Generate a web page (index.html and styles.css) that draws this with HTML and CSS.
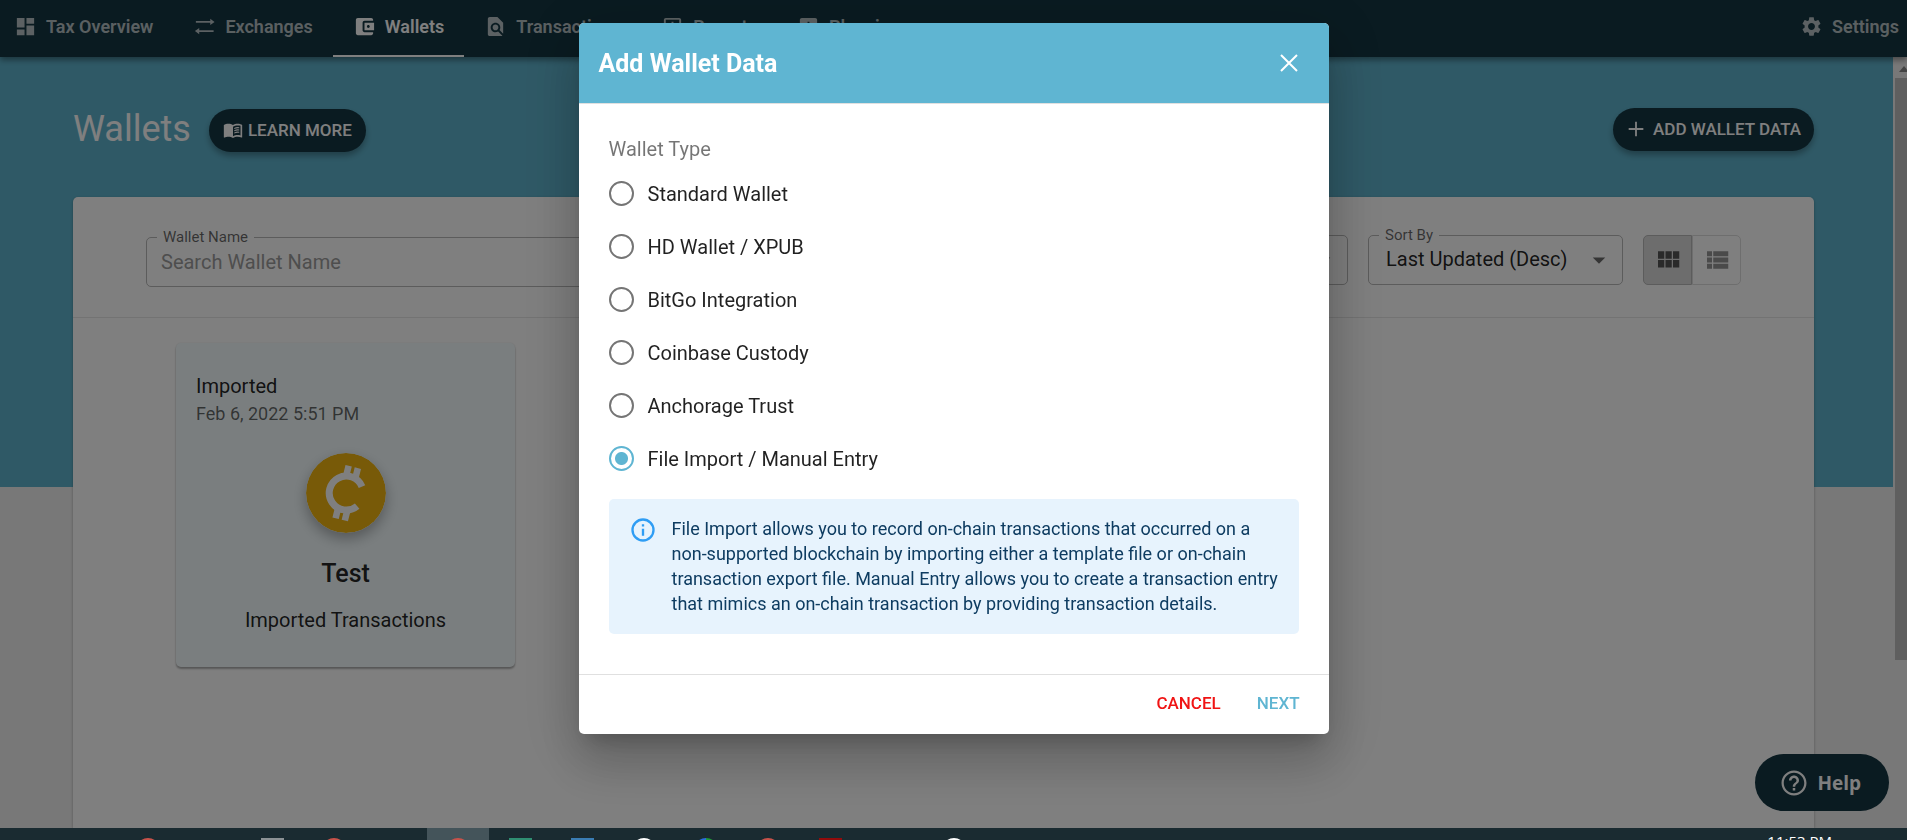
FILE: index.html
```
<!DOCTYPE html>
<html lang="en">
<head>
  <meta charset="UTF-8">
  <meta name="viewport" content="width=device-width, initial-scale=1.0">
  <title>Wallets</title>
  <link rel="stylesheet" href="styles.css">
</head>
<body>

  <div class="app">
    <nav class="navbar">
      <a href="#" class="tab">
        <svg class="icon" viewBox="0 0 24 24"><path d="M3 13h8V3H3v10zm0 8h8v-6H3v6zm10 0h8V11h-8v10zm0-18v6h8V3h-8z"/></svg>
        Tax Overview
      </a>
      <a href="#" class="tab">
        <svg class="icon" viewBox="0 0 24 24"><path d="M3 6.200h15V4l4.500 3.200-4.500 3.200V8.200H3zM21.500 17.800h-15V20L2 16.800l4.500-3.200v2.200h15z"/></svg>
        Exchanges
      </a>
      <a href="#" class="tab active">
        <svg class="icon" viewBox="0 0 24 24"><path d="M21 18v1c0 1.100-.9 2-2 2H5c-1.110 0-2-.9-2-2V5c0-1.100.89-2 2-2h14c1.100 0 2 .9 2 2v1h-9c-1.110 0-2 .9-2 2v8c0 1.100.89 2 2 2h9zm-9-2h10V8H12v8zm4-2.500c-.83 0-1.500-.67-1.500-1.500s.67-1.500 1.500-1.500 1.500.67 1.500 1.500-.67 1.500-1.500 1.500z"/></svg>
        Wallets
      </a>
      <a href="#" class="tab">
        <svg class="icon" viewBox="0 0 24 24"><path d="M20 19.590V8l-6-6H6c-1.100 0-1.990.9-1.990 2L4 20c0 1.100.89 2 1.990 2H18c.45 0 .85-.15 1.190-.4l-4.430-4.430c-.8.52-1.740.83-2.760.83-2.760 0-5-2.240-5-5s2.240-5 5-5 5 2.240 5 5c0 1.020-.31 1.960-.83 2.750L20 19.590zM9 13c0 1.660 1.340 3 3 3s3-1.340 3-3-1.340-3-3-3-3 1.340-3 3z"/></svg>
        Transactions
      </a>
      <a href="#" class="tab">
        <svg class="icon" viewBox="0 0 24 24"><path d="M19 3H5c-1.100 0-2 .9-2 2v14c0 1.100.9 2 2 2h14c1.100 0 2-.9 2-2V5c0-1.100-.9-2-2-2zm0 16H5V5h14v14zM7 10h2v7H7zm4-3h2v10h-2zm4 6h2v4h-2z"/></svg>
        Reports
      </a>
      <a href="#" class="tab">
        <svg class="icon" viewBox="0 0 24 24"><path d="M19 3H5c-1.100 0-2 .9-2 2v14c0 1.100.9 2 2 2h14c1.100 0 2-.9 2-2V5c0-1.100-.9-2-2-2zM9 17H7v-7h2v7zm4 0h-2V7h2v10zm4 0h-2v-4h2v4z"/></svg>
        Planning
      </a>
      <a href="#" class="tab settings">
        <svg class="icon" viewBox="0 0 24 24"><path d="M19.140 12.940c.04-.3.06-.61.06-.94 0-.32-.02-.64-.07-.94l2.030-1.580c.18-.14.23-.41.12-.61l-1.920-3.320c-.12-.22-.37-.29-.59-.22l-2.390.96c-.5-.38-1.030-.7-1.620-.94l-.36-2.540c-.04-.24-.24-.41-.48-.41h-3.840c-.24 0-.43.17-.47.41l-.36 2.540c-.59.24-1.130.57-1.620.94l-2.390-.96c-.22-.08-.47 0-.59.22L2.740 8.870c-.12.21-.08.47.12.61l2.030 1.580c-.05.3-.09.63-.09.94s.02.64.07.94l-2.030 1.580c-.18.14-.23.41-.12.61l1.920 3.320c.12.22.37.29.59.22l2.390-.96c.5.38 1.030.7 1.620.94l.36 2.540c.05.24.24.41.48.41h3.840c.24 0 .44-.17.47-.41l.36-2.540c.59-.24 1.130-.56 1.620-.94l2.390.96c.22.08.47 0 .59-.22l1.920-3.320c.12-.22.07-.47-.12-.61l-2.010-1.580zM12 15.600c-1.980 0-3.600-1.620-3.600-3.600s1.620-3.600 3.600-3.600 3.600 1.620 3.600 3.600-1.620 3.600-3.600 3.600z"/></svg>
        Settings
      </a>
    </nav>

    <div class="page">
      <main class="content">
        <header class="page-header">
          <h1>Wallets</h1>
          <button type="button" class="pill learn-more">
            <svg viewBox="0 0 24 24"><path d="M21 5c-1.110-.35-2.330-.5-3.500-.5-1.950 0-4.050.4-5.500 1.500-1.450-1.100-3.550-1.500-5.500-1.500S2.450 4.900 1 6v14.650c0 .25.25.5.5.5.1 0 .15-.05.25-.05C3.100 20.450 5.050 20 6.500 20c1.950 0 4.050.4 5.500 1.500 1.350-.85 3.800-1.500 5.500-1.500 1.650 0 3.350.3 4.750 1.050.1.05.15.05.25.05.25 0 .5-.25.5-.5V6c-.6-.45-1.250-.75-2-1zm0 13.500c-1.100-.35-2.300-.5-3.500-.5-1.700 0-4.150.65-5.500 1.500V8c1.350-.85 3.800-1.500 5.500-1.500 1.200 0 2.400.15 3.500.5v11.500z"/><path d="M13.500 9.500q3-1.500 6-.8V10q-3-.7-6 .8zM13.500 12.200q3-1.500 6-.8v1.300q-3-.7-6 .8zM13.500 14.900q3-1.500 6-.8v1.300q-3-.7-6 .8z"/></svg>
            LEARN MORE
          </button>
          <button type="button" class="pill add-wallet">
            <svg viewBox="0 0 24 24"><path d="M20 13h-7v7h-2v-7H4v-2h7V4h2v7h7z"/></svg>
            ADD WALLET DATA
          </button>
        </header>

        <section class="panel">
          <div class="filters">
            <div class="field field-name">
              <label for="wallet-name">Wallet Name</label>
              <input type="text" id="wallet-name" placeholder="Search Wallet Name">
            </div>
            <div class="field field-select">
              <label for="wallet-filter">Type</label>
              <select id="wallet-filter"><option>All</option></select>
              <svg class="caret" viewBox="0 0 24 24"><path d="M7 10l5 5 5-5z"/></svg>
            </div>
            <div class="field field-select">
              <label for="sort-by">Sort By</label>
              <select id="sort-by"><option>Last Updated (Desc)</option></select>
              <svg class="caret" viewBox="0 0 24 24"><path d="M7 10l5 5 5-5z"/></svg>
            </div>
            <div class="view-toggle">
              <button type="button" class="selected" aria-label="Grid view">
                <svg viewBox="0 0 24 24"><path d="M4 11h5V5H4v6zm0 7h5v-6H4v6zm6 0h5v-6h-5v6zm6 0h5v-6h-5v6zm-6-7h5V5h-5v6zm6-6v6h5V5h-5z"/></svg>
              </button>
              <button type="button" aria-label="List view">
                <svg viewBox="0 0 24 24"><path d="M4 14h4v-4H4v4zm0 5h4v-4H4v4zM4 9h4V5H4v4zm5 5h12v-4H9v4zm0 5h12v-4H9v4zM9 5v4h12V5H9z"/></svg>
              </button>
            </div>
          </div>

          <div class="wallet-grid">
            <article class="wallet-card">
              <div class="wallet-kind">Imported</div>
              <div class="wallet-date">Feb 6, 2022 5:51 PM</div>
              <svg class="coin" viewBox="0 0 80 80">
                <circle cx="40" cy="40" r="40" fill="#f0b510"/>
                <g transform="rotate(14 40 40)" fill="none" stroke="#fff" stroke-width="6.500">
                  <path d="M54 50A17 17 0 1 1 54 30" stroke-width="7"/>
                  <path d="M36 13v12M45.500 13v12M36 55v12M45.500 55v12"/>
                </g>
              </svg>
              <h2>Test</h2>
              <p>Imported Transactions</p>
            </article>
          </div>
        </section>
      </main>

      <div class="scrollbar">
        <svg class="scroll-up" viewBox="0 0 10 6"><path d="M0 6l5-6 5 6z"/></svg>
        <div class="scroll-thumb"></div>
      </div>
    </div>

    <button type="button" class="help">
      <svg viewBox="0 0 24 24"><path d="M11 18h2v-2h-2v2zm1-16C6.480 2 2 6.480 2 12s4.480 10 10 10 10-4.480 10-10S17.520 2 12 2zm0 18.200c-4.500 0-8.200-3.700-8.200-8.200S7.500 3.800 12 3.800s8.200 3.700 8.200 8.200-3.700 8.200-8.200 8.200zM12 6c-2.210 0-4 1.790-4 4h2c0-1.100.9-2 2-2s2 .9 2 2c0 2-3 1.750-3 5h2c0-2.250 3-2.500 3-5 0-2.210-1.790-4-4-4z"/></svg>
      Help
    </button>
  </div>

  <div class="backdrop">
    <form class="dialog" role="dialog" aria-labelledby="dialog-title">
      <header class="dialog-header">
        <h2 id="dialog-title">Add Wallet Data</h2>
        <button type="button" class="close" aria-label="Close">
          <svg viewBox="0 0 24 24"><path d="M4 4l16 16M20 4L4 20"/></svg>
        </button>
      </header>

      <div class="dialog-body">
        <fieldset class="wallet-types">
          <legend>Wallet Type</legend>
          <label><input type="radio" name="wallet-type" value="standard">Standard Wallet</label>
          <label><input type="radio" name="wallet-type" value="hd">HD Wallet / XPUB</label>
          <label><input type="radio" name="wallet-type" value="bitgo">BitGo Integration</label>
          <label><input type="radio" name="wallet-type" value="coinbase">Coinbase Custody</label>
          <label><input type="radio" name="wallet-type" value="anchorage">Anchorage Trust</label>
          <label><input type="radio" name="wallet-type" value="file" checked>File Import / Manual Entry</label>
        </fieldset>

        <div class="alert">
          <svg viewBox="0 0 24 24"><circle cx="12" cy="12" r="9"/><path d="M12 7v2M12 11v6"/></svg>
          <p>File Import allows you to record on-chain transactions that occurred on a non-supported blockchain by importing either a template file or on-chain transaction export file. Manual Entry allows you to create a transaction entry that mimics an on-chain transaction by providing transaction details.</p>
        </div>
      </div>

      <footer class="dialog-footer">
        <button type="button" class="cancel">CANCEL</button>
        <button type="submit" class="next">NEXT</button>
      </footer>
    </form>
  </div>

  <div class="taskbar">
    <div class="task-apps">
      <span class="task"><i class="dot red"></i></span>
      <span class="task"></span>
      <span class="task"><i class="square gray"></i></span>
      <span class="task"><i class="dot red"></i></span>
      <span class="task"></span>
      <span class="task open"><i class="dot red"></i></span>
      <span class="task"><i class="square green"></i></span>
      <span class="task"><i class="square blue"></i></span>
      <span class="task"><i class="dot white"></i></span>
      <span class="task"><i class="dot multi"></i></span>
      <span class="task"><i class="dot red"></i></span>
      <span class="task"><i class="square darkred"></i></span>
      <span class="task"></span>
      <span class="task"><i class="dot white"></i></span>
    </div>
    <time class="clock">11:53 PM</time>
  </div>

</body>
</html>
```

FILE: styles.css
```
* {
  box-sizing: border-box;
}

body {
  margin: 0;
  height: 100vh;
  display: flex;
  flex-direction: column;
  overflow: hidden;
  font-family: Roboto, sans-serif;
  font-size: 20px;
  color: rgba(0, 0, 0, 0.87);
}

button, input, select {
  font-family: inherit;
  font-size: inherit;
}

button {
  border: none;
  cursor: pointer;
}

h1, h2, p {
  margin: 0;
}

svg {
  fill: currentColor;
  flex-shrink: 0;
}

.app {
  flex: 1;
  min-height: 0;
  display: flex;
  flex-direction: column;
  position: relative;
}

/* top navigation */
.navbar {
  display: flex;
  height: 57px;
  background-color: #143642;
  box-shadow: 0 3px 6px rgba(0, 0, 0, 0.4);
  z-index: 1;
}

.tab {
  display: flex;
  align-items: center;
  gap: 9px;
  padding: 0 20px 3px;
  color: rgba(255, 255, 255, 0.7);
  font-size: 18px;
  font-weight: 600;
  text-decoration: none;
  border-bottom: 2px solid transparent;
}

.tab:first-child {
  padding-left: 14px;
}

.tab .icon {
  width: 23px;
  height: 23px;
}

.tab.active {
  color: #fff;
  border-bottom-color: #fff;
}

.tab.settings {
  margin-left: auto;
  padding-right: 8px;
}

/* page */
.page {
  flex: 1;
  min-height: 0;
  display: flex;
  background: linear-gradient(#5fb3cd 430px, #f1f1f1 430px);
}

.content {
  flex: 1;
  display: flex;
  flex-direction: column;
  padding: 0 79px 0 73px;
}

.page-header {
  display: flex;
  align-items: center;
  height: 140px;
  padding-top: 4px;
}

h1 {
  font-size: 36px;
  font-weight: 400;
  color: #fff;
  margin-right: 18px;
}

.pill {
  display: flex;
  align-items: center;
  height: 43px;
  border-radius: 22px;
  background-color: #143642;
  color: #fff;
  font-size: 17px;
  font-weight: 500;
  box-shadow: 0 4px 6px rgba(0, 0, 0, 0.3);
}

.learn-more {
  gap: 5px;
  padding: 0 14px;
  margin-top: 2px;
}

.learn-more svg {
  width: 20px;
  height: 20px;
}

.add-wallet {
  margin-left: auto;
  gap: 6px;
  padding: 0 13px 0 12px;
}

.add-wallet svg {
  width: 22px;
  height: 22px;
}

.panel {
  flex: 1;
  background-color: #fff;
  border-radius: 5px 5px 0 0;
  box-shadow: 0 1px 3px rgba(0, 0, 0, 0.3);
}

.filters {
  display: flex;
  align-items: flex-start;
  gap: 20px;
  padding: 38px 73px 30px;
  border-bottom: 1px solid #e6e6e6;
}

.field {
  position: relative;
  height: 50px;
}

.field-name {
  flex: 1;
  margin-top: 2px;
}

.field-select {
  width: 255px;
}

.field label {
  position: absolute;
  top: -9px;
  left: 11px;
  padding: 0 6px;
  background-color: #fff;
  color: rgba(0, 0, 0, 0.6);
  font-size: 15px;
  line-height: 18px;
}

.field input,
.field select {
  width: 100%;
  height: 100%;
  padding: 0 14px;
  border: 1px solid #b8b8b8;
  border-radius: 5px;
  background: none;
  color: rgba(0, 0, 0, 0.87);
  appearance: none;
}

.field select {
  padding: 0 17px 2px;
}

.field input::placeholder {
  color: #9c9c9c;
}

.caret {
  position: absolute;
  right: 9px;
  top: 10px;
  width: 30px;
  height: 30px;
  color: #6b6b6b;
}

.view-toggle {
  display: flex;
  height: 50px;
}

.view-toggle button {
  display: flex;
  align-items: center;
  justify-content: center;
  width: 49px;
  padding: 0;
  border: 1px solid #dcdcdc;
  border-radius: 0 5px 5px 0;
  background: none;
  color: #949494;
}

.view-toggle .selected {
  border-color: #b8b8b8;
  border-radius: 5px 0 0 5px;
  background-color: #dadada;
  color: #555;
}

.view-toggle svg {
  width: 30px;
  height: 30px;
}

.wallet-grid {
  display: flex;
  padding: 25px 103px;
}

.wallet-card {
  display: flex;
  flex-direction: column;
  width: 339px;
  height: 324px;
  padding: 29px 20px;
  background-color: #f5fdff;
  border-radius: 5px;
  box-shadow: 0 2px 2px rgba(0, 0, 0, 0.3), 0 0 2px rgba(0, 0, 0, 0.1);
}

.wallet-kind {
  line-height: 28px;
}

.wallet-date {
  font-size: 18px;
  line-height: 28px;
  color: rgba(0, 0, 0, 0.6);
}

.coin {
  width: 80px;
  height: 80px;
  margin: 25px auto 25px;
  border-radius: 50%;
  box-shadow: 0 6px 14px rgba(0, 0, 0, 0.3);
}

.wallet-card h2 {
  font-size: 25px;
  line-height: 32px;
  font-weight: 500;
  text-align: center;
}

.wallet-card p {
  margin-top: 16px;
  line-height: 28px;
  text-align: center;
}

.scrollbar {
  width: 14px;
  padding-left: 2px;
  background-color: #f1f1f1;
  overflow: hidden;
}

.scroll-up {
  display: block;
  width: 10px;
  height: 6px;
  margin: 9px 0 6px 4px;
  color: #888;
}

.scroll-thumb {
  height: 582px;
  background-color: #bfbfbf;
}

.help {
  position: absolute;
  right: 18px;
  bottom: 17px;
  display: flex;
  align-items: center;
  gap: 8px;
  height: 57px;
  padding: 0 28px 0 24px;
  border-radius: 29px;
  background-color: #143642;
  color: #fff;
  font-family: "Open Sans", sans-serif;
  font-size: 19px;
  font-weight: 700;
}

.help svg {
  width: 30px;
  height: 30px;
}

/* dialog */
.backdrop {
  position: fixed;
  inset: 0;
  z-index: 2;
  display: flex;
  align-items: flex-start;
  justify-content: center;
  padding-top: 23px;
  background-color: rgba(0, 0, 0, 0.5);
}

.dialog {
  width: 750px;
  border-radius: 5px;
  background-color: #fff;
  overflow: hidden;
  box-shadow: 0 14px 19px -9px rgba(0, 0, 0, 0.2),
    0 30px 48px 4px rgba(0, 0, 0, 0.14),
    0 11px 58px 10px rgba(0, 0, 0, 0.12);
}

.dialog-header {
  display: flex;
  align-items: center;
  justify-content: space-between;
  height: 80px;
  padding: 0 28px 0 20px;
  background-color: #5fb5d2;
  color: #fff;
}

.dialog-header h2 {
  font-size: 25px;
  font-weight: 700;
}

.close {
  display: flex;
  padding: 0;
  background: none;
  color: #fff;
}

.close svg {
  width: 24px;
  height: 24px;
  stroke: currentColor;
  stroke-width: 2;
}

.dialog-body {
  padding: 31px 30px 40px;
  border-top: 1px solid #e0e0e0;
  border-bottom: 1px solid #e0e0e0;
}

.wallet-types {
  margin: 0;
  padding: 0;
  border: none;
}

.wallet-types legend {
  padding: 0;
  line-height: 28px;
  color: rgba(0, 0, 0, 0.54);
}

.wallet-types label {
  display: flex;
  align-items: center;
  gap: 14px;
  height: 53px;
}

.wallet-types legend + label {
  margin-top: 4px;
}

.wallet-types input {
  appearance: none;
  width: 25px;
  height: 25px;
  margin: 0;
  border: 2px solid #757575;
  border-radius: 50%;
}

.wallet-types input:checked {
  border-color: #5fb5d2;
  background: radial-gradient(#5fb5d2 6px, transparent 7px);
}

.alert {
  display: flex;
  gap: 15px;
  margin-top: 14px;
  padding: 17px 20px 18px;
  border-radius: 5px;
  background-color: #e7f3fd;
  color: #0e3c61;
}

.alert svg {
  width: 28px;
  height: 28px;
  fill: none;
  stroke: #2f9df4;
  stroke-width: 2;
}

.alert p {
  font-size: 18px;
  line-height: 25px;
}

.dialog-footer {
  display: flex;
  justify-content: flex-end;
  gap: 36px;
  height: 59px;
  padding: 0 29px 3px;
}

.dialog-footer button {
  padding: 0;
  background: none;
  font-size: 17px;
  font-weight: 500;
}

.cancel {
  color: #f01414;
}

.next {
  color: #5fb5d2;
}

/* desktop taskbar */
.taskbar {
  position: relative;
  z-index: 3;
  display: flex;
  justify-content: space-between;
  height: 12px;
  padding: 0 75px 0 117px;
  background-color: #1a2b31;
  overflow: hidden;
}

.task-apps {
  display: flex;
}

.task {
  display: flex;
  justify-content: center;
  width: 62px;
  height: 40px;
  padding-top: 10px;
}

.task.open {
  background-color: #44545a;
}

.dot {
  width: 24px;
  height: 24px;
  border-radius: 50%;
}

.square {
  width: 23px;
  height: 24px;
}

.red {
  background-color: #c8524a;
}

.gray {
  background-color: #8c9295;
}

.green {
  background-color: #2f8f72;
}

.blue {
  background-color: #3a7db4;
}

.white {
  background-color: #fff;
}

.multi {
  background: linear-gradient(90deg, #2a6fdc 50%, #1f9a3c 50%);
}

.darkred {
  background-color: #930b0b;
}

.clock {
  margin-top: 4px;
  color: #fff;
  font-family: "Open Sans", sans-serif;
  font-size: 15px;
  line-height: 18px;
}
```
